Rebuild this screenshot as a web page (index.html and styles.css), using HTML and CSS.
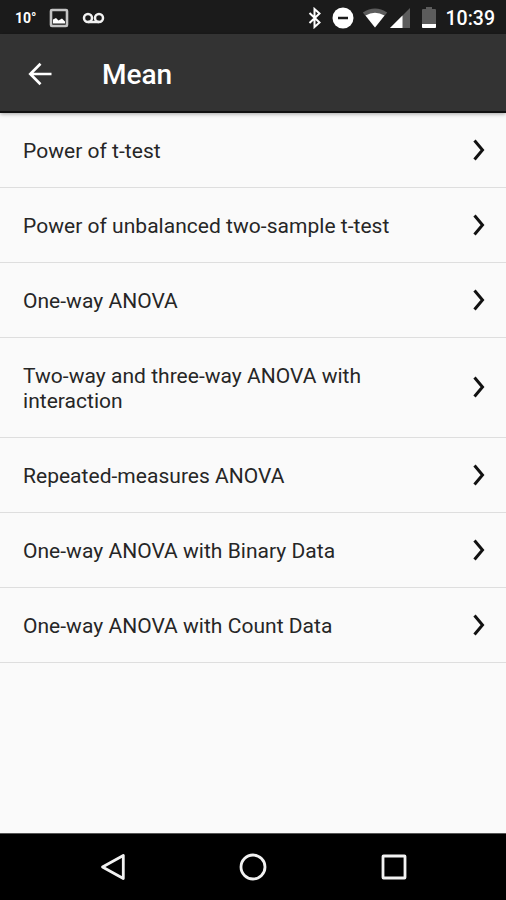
FILE: index.html
```html
<!DOCTYPE html>
<html lang="en">
<head>
  <meta charset="UTF-8">
  <meta name="viewport" content="width=device-width, initial-scale=1.0">
  <title>Mean</title>
  <link rel="stylesheet" href="styles.css">
</head>
<body>

  <div class="status-bar">
    <span class="temp">10°</span>
    <svg class="icon-picture" width="20" height="20" viewBox="0 0 20 20">
      <rect x="2" y="2" width="16" height="16" rx="1" fill="none" stroke="#c4c4c4" stroke-width="2.600"/>
      <path d="M4 15.500v-4l3-1.500 2.500 2.500 3.500-2 3 3v2z" fill="#fff"/>
    </svg>
    <svg class="icon-voicemail" width="24" height="12" viewBox="0 0 24 12">
      <circle cx="6" cy="6" r="4" fill="none" stroke="#f2f2f2" stroke-width="2.500"/>
      <circle cx="17" cy="6" r="4" fill="none" stroke="#f2f2f2" stroke-width="2.500"/>
      <path d="M6 10h11" stroke="#f2f2f2" stroke-width="2.500"/>
    </svg>

    <div class="system">
      <svg class="icon-bluetooth" width="14" height="22" viewBox="0 0 14 22">
        <path d="M1.500 6l10 9.500-5 4.500V2l5 4.500-10 9.500" fill="none" stroke="#fff" stroke-width="2"/>
      </svg>
      <svg class="icon-dnd" width="22" height="22" viewBox="0 0 22 22">
        <circle cx="11" cy="11" r="10.500" fill="#fff"/>
        <path d="M6 11h10" stroke="#1b1b1b" stroke-width="2.500"/>
      </svg>
      <svg class="icon-wifi" width="26" height="20" viewBox="0 0 26 20">
        <path d="M13 19.500L.800 4.500Q13-3.500 25.200 4.500z" fill="#5c5c5c"/>
        <path d="M13 19.500L3.500 7.500Q13 2 22.500 7.500z" fill="#fff"/>
      </svg>
      <svg class="icon-signal" width="20" height="20" viewBox="0 0 20 20">
        <path d="M20 0v20H0z" fill="#5c5c5c"/>
        <path d="M12.500 7.500V20H0z" fill="#fff"/>
      </svg>
      <svg class="icon-battery" width="14" height="21" viewBox="0 0 14 21">
        <path d="M4 0h6v2h3q1 0 1 1v17q0 1-1 1H1q-1 0-1-1V3q0-1 1-1h3z" fill="#5c5c5c"/>
        <path d="M0 17h14v3q0 1-1 1H1q-1 0-1-1z" fill="#fff"/>
      </svg>
      <span class="clock">10:39</span>
    </div>
  </div>

  <header class="toolbar">
    <svg class="back" width="24" height="24" viewBox="0 0 24 24">
      <path d="M23.500 12H2.500M12.500 1.800L2.300 12l10.200 10.200" fill="none" stroke="#fff" stroke-width="2.700"/>
    </svg>
    <h1>Mean</h1>
  </header>

  <ul class="list">
    <li>
      <span>Power of t-test</span>
      <svg class="chevron" width="12" height="22" viewBox="0 0 12 22"><path d="M1.500 1.500L9.500 11l-8 9.500"/></svg>
    </li>
    <li>
      <span>Power of unbalanced two-sample t-test</span>
      <svg class="chevron" width="12" height="22" viewBox="0 0 12 22"><path d="M1.500 1.500L9.500 11l-8 9.500"/></svg>
    </li>
    <li>
      <span>One-way ANOVA</span>
      <svg class="chevron" width="12" height="22" viewBox="0 0 12 22"><path d="M1.500 1.500L9.500 11l-8 9.500"/></svg>
    </li>
    <li>
      <span>Two-way and three-way ANOVA with interaction</span>
      <svg class="chevron" width="12" height="22" viewBox="0 0 12 22"><path d="M1.500 1.500L9.500 11l-8 9.500"/></svg>
    </li>
    <li>
      <span>Repeated-measures ANOVA</span>
      <svg class="chevron" width="12" height="22" viewBox="0 0 12 22"><path d="M1.500 1.500L9.500 11l-8 9.500"/></svg>
    </li>
    <li>
      <span>One-way ANOVA with Binary Data</span>
      <svg class="chevron" width="12" height="22" viewBox="0 0 12 22"><path d="M1.500 1.500L9.500 11l-8 9.500"/></svg>
    </li>
    <li>
      <span>One-way ANOVA with Count Data</span>
      <svg class="chevron" width="12" height="22" viewBox="0 0 12 22"><path d="M1.500 1.500L9.500 11l-8 9.500"/></svg>
    </li>
  </ul>

  <nav class="nav-bar">
    <svg width="28" height="28" viewBox="0 0 28 28"><path d="M24.300 2.500v23L3.500 14z"/></svg>
    <svg width="28" height="28" viewBox="0 0 28 28"><circle cx="14" cy="14" r="12"/></svg>
    <svg width="28" height="28" viewBox="0 0 28 28"><rect x="3" y="3" width="22" height="22" rx="0.500"/></svg>
  </nav>

</body>
</html>
```

FILE: styles.css
```css
* {
  box-sizing: border-box;
}

body {
  margin: 0;
  height: 900px;
  display: flex;
  flex-direction: column;
  font-family: Roboto, "Liberation Sans", sans-serif;
  background-color: #fafafa;
  color: #262626;
}

svg {
  display: block;
  flex-shrink: 0;
}

/* status bar */
.status-bar {
  height: 34px;
  display: flex;
  align-items: center;
  padding: 1px 11px 0 15px;
  background-color: #1b1b1b;
  color: #fff;
}

.temp {
  width: 34px;
  font-size: 14px;
  font-weight: 700;
}

.icon-voicemail {
  margin-left: 13px;
}

.system {
  display: flex;
  align-items: center;
  margin-left: auto;
}

.icon-dnd {
  margin-left: 10px;
}

.icon-wifi {
  margin-left: 8px;
}

.icon-signal {
  margin-left: 2px;
}

.icon-battery {
  margin-left: 12px;
}

.clock {
  margin-left: 10px;
  padding-top: 2px;
  font-size: 19.5px;
  font-weight: 500;
  line-height: 32px;
}

/* toolbar */
.toolbar {
  height: 79px;
  display: flex;
  align-items: center;
  padding: 2px 0 0 28px;
  background-color: #333;
  border-bottom: 2px solid #111;
  box-shadow: 0 1px 4px rgba(0, 0, 0, 0.35);
}

.toolbar h1 {
  margin: 2px 0 0 50px;
  font-size: 28px;
  font-weight: 500;
  color: #fff;
}

/* list */
.list {
  flex: 1;
  margin: 0;
  padding: 0;
  list-style: none;
}

.list li {
  display: flex;
  align-items: center;
  justify-content: space-between;
  min-height: 75px;
  padding: 26px 21px 23px 23px;
  border-bottom: 1px solid #dedede;
  font-size: 21px;
  letter-spacing: 0.03px;
  line-height: 25px;
}

.list span {
  max-width: 380px;
}

.chevron {
  margin: -4px 0 0;
}

.chevron path {
  fill: none;
  stroke: #111;
  stroke-width: 3;
}

/* navigation bar */
.nav-bar {
  height: 67px;
  display: flex;
  align-items: center;
  justify-content: center;
  gap: 112.5px;
  background-color: #000;
  border-top: 1px solid #555;
}

.nav-bar svg path,
.nav-bar svg circle,
.nav-bar svg rect {
  fill: none;
  stroke: #f2f2f2;
  stroke-width: 2.8;
  stroke-linejoin: round;
}
```
